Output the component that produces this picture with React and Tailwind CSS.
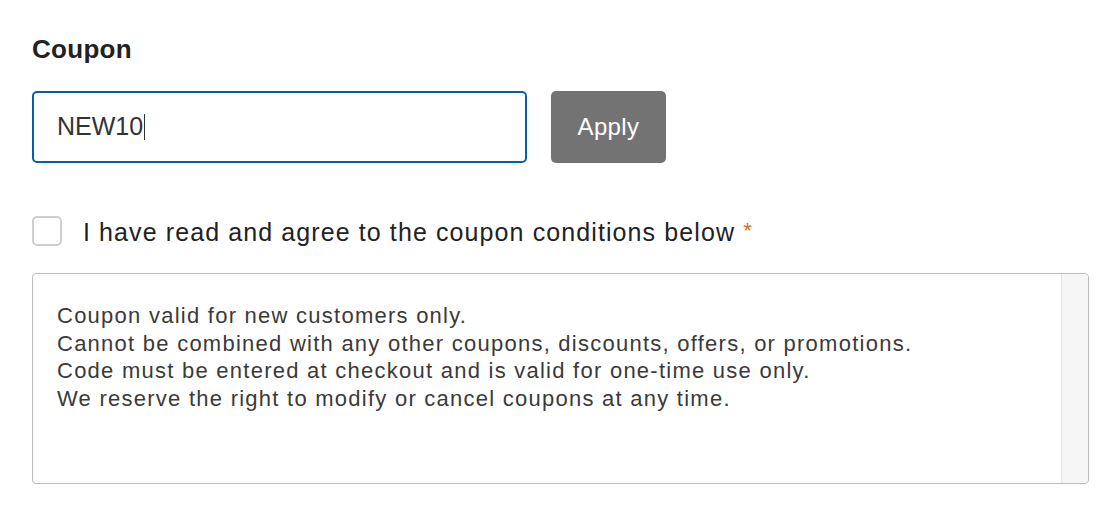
import React, { useState } from 'react';

const conditions = [
    'Coupon valid for new customers only.',
    'Cannot be combined with any other coupons, discounts, offers, or promotions.',
    'Code must be entered at checkout and is valid for one-time use only.',
    'We reserve the right to modify or cancel coupons at any time.',
];

const App = () => {
    const [code, setCode] = useState('NEW10');
    const [agreed, setAgreed] = useState(false);

    return (
        <div className="min-h-screen bg-white font-['Liberation_Sans',Arial,sans-serif] pl-[32px] pr-[27px] pt-[34px]">
            <div className="text-[26px] font-bold text-[#222] leading-[30px] tracking-[0.3px]">Coupon</div>

            <div className="flex items-center gap-[24px] mt-[27px]">
                <div className="w-[495px] h-[72px] border-2 border-[#0b5cad] rounded-[5px] flex items-center pl-[23px]">
                    <span className="text-[25px] text-[#333]">{code}</span>
                    <span className="w-px h-[26px] bg-[#333] ml-[1px]"></span>
                </div>
                <button
                    className="w-[115px] h-[72px] bg-[#737373] rounded-[5px] text-white text-[24px] tracking-[0.4px]"
                    onClick={() => setCode(code)}
                >
                    Apply
                </button>
            </div>

            <label className="flex items-center mt-[52px] cursor-pointer">
                <span
                    className={`w-[30px] h-[30px] rounded-[5px] border-2 border-[#cfcfcf] ${agreed ? 'bg-[#0b5cad]' : 'bg-white'}`}
                    onClick={() => setAgreed(!agreed)}
                ></span>
                <span className="ml-[21px] relative top-[2px] text-[25px] leading-[30px] text-[#222] tracking-[1.1px]">
                    I have read and agree to the coupon conditions below{' '}
                    <span className="text-[#c8701e] text-[22px] relative top-[-3px]">*</span>
                </span>
            </label>

            <div className="mt-[26px] h-[211px] border border-[#bdbdbd] rounded-[4px] flex">
                <div className="flex-1 pl-[24px] pt-[28px] text-[22px] leading-[27.5px] text-[#3a3a3a] tracking-[1.25px]">
                    {conditions.map((line) => (
                        <div key={line}>{line}</div>
                    ))}
                </div>
                <div className="w-[27px] bg-[#f6f6f6] border-l border-[#e6e6e6] rounded-r-[4px]"></div>
            </div>
        </div>
    );
};

export default App;
